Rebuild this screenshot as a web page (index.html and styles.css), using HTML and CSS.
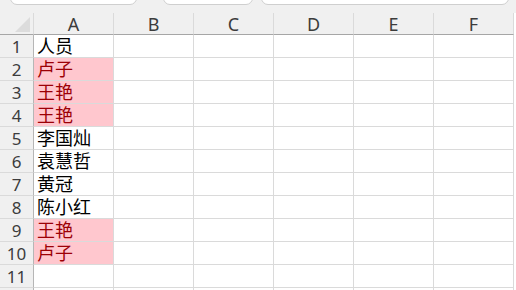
FILE: index.html
```html
<!DOCTYPE html>
<html lang="zh-CN">
<head>
  <meta charset="UTF-8" />
  <title>Sheet</title>
  <link rel="stylesheet" href="styles.css">
</head>
<body>
  <div class="topbar">
    <div class="tab tab-1"></div>
    <div class="tab tab-2"></div>
    <div class="tab tab-3"></div>
  </div>

  <div class="sheet">
    <div class="corner"><span class="tri"></span></div>
    <div class="colhead">A</div>
    <div class="colhead">B</div>
    <div class="colhead">C</div>
    <div class="colhead">D</div>
    <div class="colhead">E</div>
    <div class="colhead">F</div>

    <div class="rowhead">1</div><div class="cell">人员</div><div class="cell"></div><div class="cell"></div><div class="cell"></div><div class="cell"></div><div class="cell"></div>
    <div class="rowhead">2</div><div class="cell dup">卢子</div><div class="cell"></div><div class="cell"></div><div class="cell"></div><div class="cell"></div><div class="cell"></div>
    <div class="rowhead">3</div><div class="cell dup">王艳</div><div class="cell"></div><div class="cell"></div><div class="cell"></div><div class="cell"></div><div class="cell"></div>
    <div class="rowhead">4</div><div class="cell dup">王艳</div><div class="cell"></div><div class="cell"></div><div class="cell"></div><div class="cell"></div><div class="cell"></div>
    <div class="rowhead">5</div><div class="cell">李国灿</div><div class="cell"></div><div class="cell"></div><div class="cell"></div><div class="cell"></div><div class="cell"></div>
    <div class="rowhead">6</div><div class="cell">袁慧哲</div><div class="cell"></div><div class="cell"></div><div class="cell"></div><div class="cell"></div><div class="cell"></div>
    <div class="rowhead">7</div><div class="cell">黄冠</div><div class="cell"></div><div class="cell"></div><div class="cell"></div><div class="cell"></div><div class="cell"></div>
    <div class="rowhead">8</div><div class="cell">陈小红</div><div class="cell"></div><div class="cell"></div><div class="cell"></div><div class="cell"></div><div class="cell"></div>
    <div class="rowhead">9</div><div class="cell dup">王艳</div><div class="cell"></div><div class="cell"></div><div class="cell"></div><div class="cell"></div><div class="cell"></div>
    <div class="rowhead">10</div><div class="cell dup">卢子</div><div class="cell"></div><div class="cell"></div><div class="cell"></div><div class="cell"></div><div class="cell"></div>
    <div class="rowhead">11</div><div class="cell"></div><div class="cell"></div><div class="cell"></div><div class="cell"></div><div class="cell"></div><div class="cell"></div>
    <div class="rowhead"></div><div class="cell"></div><div class="cell"></div><div class="cell"></div><div class="cell"></div><div class="cell"></div><div class="cell"></div>
  </div>
</body>
</html>
```

FILE: styles.css
```css
body {
  margin: 0;
  background: #ffffff;
  font-family: "Noto Sans", "Noto Sans CJK SC", sans-serif;
  overflow: hidden;
}
.topbar {
  height: 13px;
  background: #f0f0f0;
  position: relative;
  overflow: hidden;
}
.tab {
  position: absolute;
  top: -10px;
  height: 13px;
  background: #ffffff;
  border: 1px solid #cfcfcf;
  border-radius: 0 0 7px 7px;
}
.tab-1 { left: 10px; width: 125px; }
.tab-2 { left: 163px; width: 88px; }
.tab-3 { left: 261px; width: 246px; }

.sheet {
  display: grid;
  grid-template-columns: 34px repeat(6, 80px);
  grid-template-rows: 22px;
  grid-auto-rows: 23px;
  width: 514px;
}
.sheet > div {
  box-sizing: border-box;
  border-right: 1px solid #dadada;
  border-bottom: 1px solid #dadada;
}
.corner {
  background: #f0f0f0;
  position: relative;
  border-bottom-color: #a6a6a6 !important;
}
.tri {
  position: absolute;
  right: 3px;
  bottom: 2px;
  width: 0;
  height: 0;
  border-left: 15px solid transparent;
  border-bottom: 15px solid #dcdcdc;
}
.colhead {
  background: #f0f0f0;
  border-bottom-color: #a6a6a6 !important;
  color: #3c3c3c;
  font-size: 18px;
  line-height: 23px;
  text-align: center;
}
.rowhead {
  background: #f0f0f0;
  border-right-color: #b6b6b6 !important;
  color: #3c3c3c;
  font-size: 17px;
  line-height: 23px;
  text-align: center;
}
.cell {
  background: #ffffff;
  color: #000000;
  font-size: 18px;
  line-height: 23px;
  padding-left: 3px;
  white-space: nowrap;
  overflow: hidden;
}
.cell.dup {
  background: #ffc7ce;
  color: #9c0006;
}
```
